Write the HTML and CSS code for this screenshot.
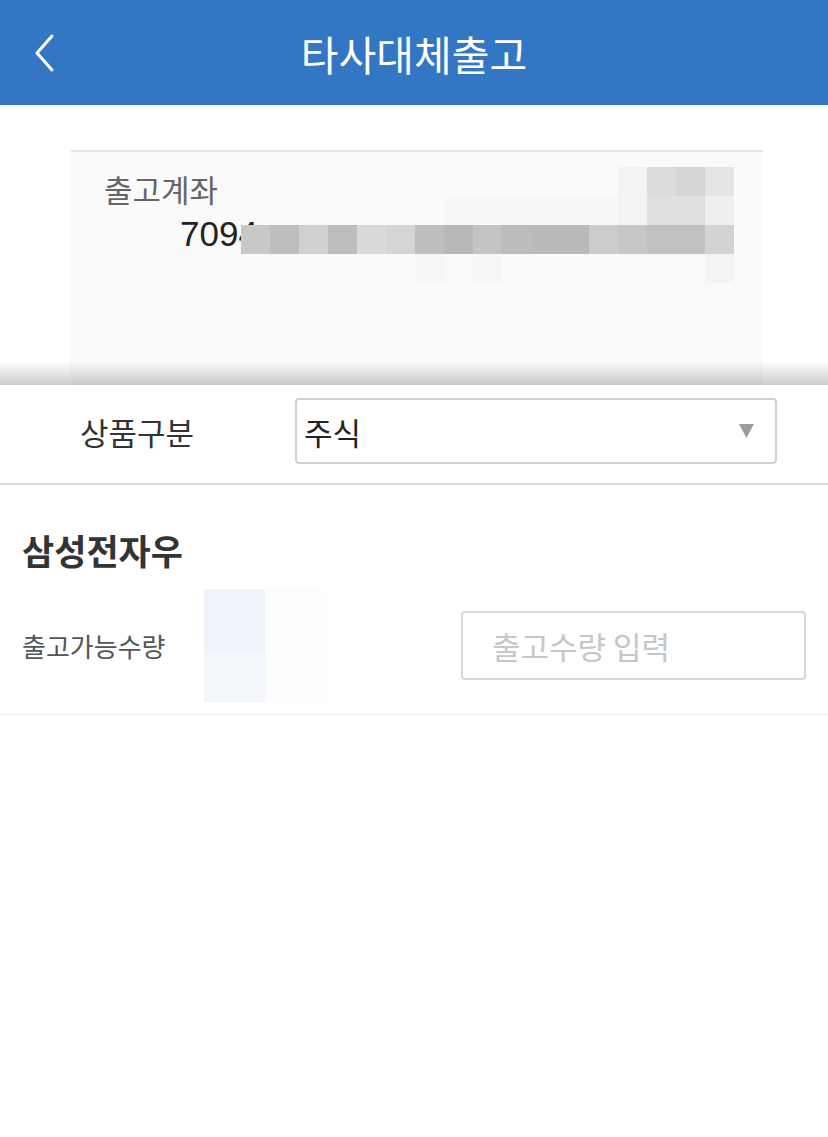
FILE: index.html
```html
<!DOCTYPE html>
<html>
<head>
    <title>타사대체출고</title>
    <link rel="stylesheet" href="styles.css">
</head>
<body>
    <div class="header">
        <div class="back">
            <svg width="24" height="40" viewBox="0 0 24 40">
                <polyline points="18,3 3,20 18,37" fill="none" stroke="#fff" stroke-width="3" stroke-linecap="round" stroke-linejoin="round"/>
            </svg>
        </div>
        <h1 class="title">타사대체출고</h1>
        <div></div>
    </div>

    <div class="account-card">
        <div class="account-label">출고계좌</div>
        <div class="account-no">7094</div>
        <svg class="mosaic" width="493" height="116" viewBox="0 0 17 4" preserveAspectRatio="none" shape-rendering="crispEdges">
            <rect x="13" y="0" width="1" height="1" fill="#f3f3f3"/>
            <rect x="14" y="0" width="1" height="1" fill="#dcdcdc"/>
            <rect x="15" y="0" width="1" height="1" fill="#d6d6d6"/>
            <rect x="16" y="0" width="1" height="1" fill="#e4e4e4"/>
            <rect x="7" y="1" width="6" height="1" fill="#f8f8f8"/>
            <rect x="13" y="1" width="1" height="1" fill="#f3f3f3"/>
            <rect x="14" y="1" width="2" height="1" fill="#e0e0e0"/>
            <rect x="16" y="1" width="1" height="1" fill="#efefef"/>
            <rect x="0" y="2" width="1" height="1" fill="#c8c8c8"/>
            <rect x="1" y="2" width="1" height="1" fill="#bebebe"/>
            <rect x="2" y="2" width="1" height="1" fill="#d0d0d0"/>
            <rect x="3" y="2" width="1" height="1" fill="#bdbdbd"/>
            <rect x="4" y="2" width="1" height="1" fill="#dadada"/>
            <rect x="5" y="2" width="1" height="1" fill="#d5d5d5"/>
            <rect x="6" y="2" width="1" height="1" fill="#bebebe"/>
            <rect x="7" y="2" width="1" height="1" fill="#b8b8b8"/>
            <rect x="8" y="2" width="1" height="1" fill="#c4c4c4"/>
            <rect x="9" y="2" width="1" height="1" fill="#bcbcbc"/>
            <rect x="10" y="2" width="2" height="1" fill="#bababa"/>
            <rect x="12" y="2" width="1" height="1" fill="#cccccc"/>
            <rect x="13" y="2" width="1" height="1" fill="#c6c6c6"/>
            <rect x="14" y="2" width="2" height="1" fill="#c1c1c1"/>
            <rect x="16" y="2" width="1" height="1" fill="#d3d3d3"/>
            <rect x="6" y="3" width="1" height="1" fill="#f6f6f6"/>
            <rect x="8" y="3" width="1" height="1" fill="#f7f7f7"/>
            <rect x="16" y="3" width="1" height="1" fill="#f4f4f4"/>
        </svg>
    </div>

    <div class="product-row">
        <div class="shade"></div>
        <label class="product-label">상품구분</label>
        <div class="select">
            <span>주식</span>
            <svg width="15" height="14" viewBox="0 0 15 14">
                <polygon points="0,0 15,0 7.5,14" fill="#9c9c9c"/>
            </svg>
        </div>
    </div>

    <div class="stock">
        <h2 class="stock-name">삼성전자우</h2>
        <div class="qty-row">
            <span class="qty-label">출고가능수량</span>
            <div class="qty-blur">
                <div class="c1"></div>
                <div class="c2"></div>
                <div class="c3"></div>
                <div class="c4"></div>
            </div>
            <input class="qty-input" type="text" placeholder="출고수량 입력">
        </div>
    </div>
</body>
</html>
```

FILE: styles.css
```css
body {
    margin: 0;
    font-family: "Noto Sans CJK KR", "Noto Sans", sans-serif;
    background: #fff;
    color: #333;
}
.header {
    display: grid;
    grid-template-columns: 1fr auto 1fr;
    align-items: center;
    height: 105px;
    background-color: #3377c4;
}
.back {
    padding-left: 34px;
    display: flex;
    align-items: center;
}
.title {
    margin: 0;
    font-size: 41px;
    font-weight: 400;
    line-height: 48px;
    color: #fff;
}
.account-card {
    position: relative;
    margin: 45px 65px 0 71px;
    padding: 19px 0 0 33px;
    box-sizing: border-box;
    height: 235px;
    background: #fafafa;
    border-top: 2px solid #e6e6e6;
}
.account-label {
    font-size: 31px;
    line-height: 36px;
    color: #666;
}
.account-no {
    margin: 10px 0 0 76px;
    font-family: "Liberation Sans", Arial, sans-serif;
    font-size: 35px;
    line-height: 34px;
    color: #222;
}
.mosaic {
    position: absolute;
    left: 170px;
    top: 15px;
}
.product-row {
    position: relative;
    display: flex;
    align-items: center;
    height: 98px;
    padding: 0 51px 0 80px;
    border-bottom: 2px solid #d6d6d6;
    background: #fff;
}
.shade {
    position: absolute;
    left: 0;
    right: 0;
    top: -24px;
    height: 24px;
    background: linear-gradient(rgba(0, 0, 0, 0), rgba(0, 0, 0, 0.2));
}
.product-label {
    width: 215px;
    font-size: 31px;
    color: #333;
    margin-top: -6px;
}
.select {
    flex: 1;
    display: flex;
    align-items: center;
    justify-content: space-between;
    height: 62px;
    margin-top: -6px;
    padding: 0 21px 0 7px;
    border: 2px solid #d0d0d0;
    border-radius: 4px;
    font-size: 31px;
    color: #222;
}
.stock {
    padding: 44px 22px 12px 22px;
    border-bottom: 1px solid #ececec;
}
.stock-name {
    margin: 0;
    font-size: 35px;
    font-weight: 700;
    line-height: 42px;
    color: #333;
}
.qty-row {
    display: flex;
    align-items: center;
    margin-top: 18px;
    height: 113px;
}
.qty-label {
    width: 182px;
    font-size: 26px;
    color: #555;
}
.qty-blur {
    display: grid;
    grid-template-columns: 61px 61px;
    grid-template-rows: 61px 52px;
}
.c1 { background: #eef4f9; }
.c2 { background: #fcfdfe; }
.c3 { background: #f3f7fb; }
.c4 { background: #fdfdfe; }
.qty-input {
    margin-left: auto;
    width: 345px;
    height: 69px;
    box-sizing: border-box;
    padding: 0 0 0 29px;
    border: 2px solid #d8d8d8;
    border-radius: 4px;
    font-family: "Noto Sans CJK KR", "Noto Sans", sans-serif;
    font-size: 31px;
    color: #333;
    outline: none;
}
.qty-input::placeholder {
    color: #c6c6c6;
}
```
